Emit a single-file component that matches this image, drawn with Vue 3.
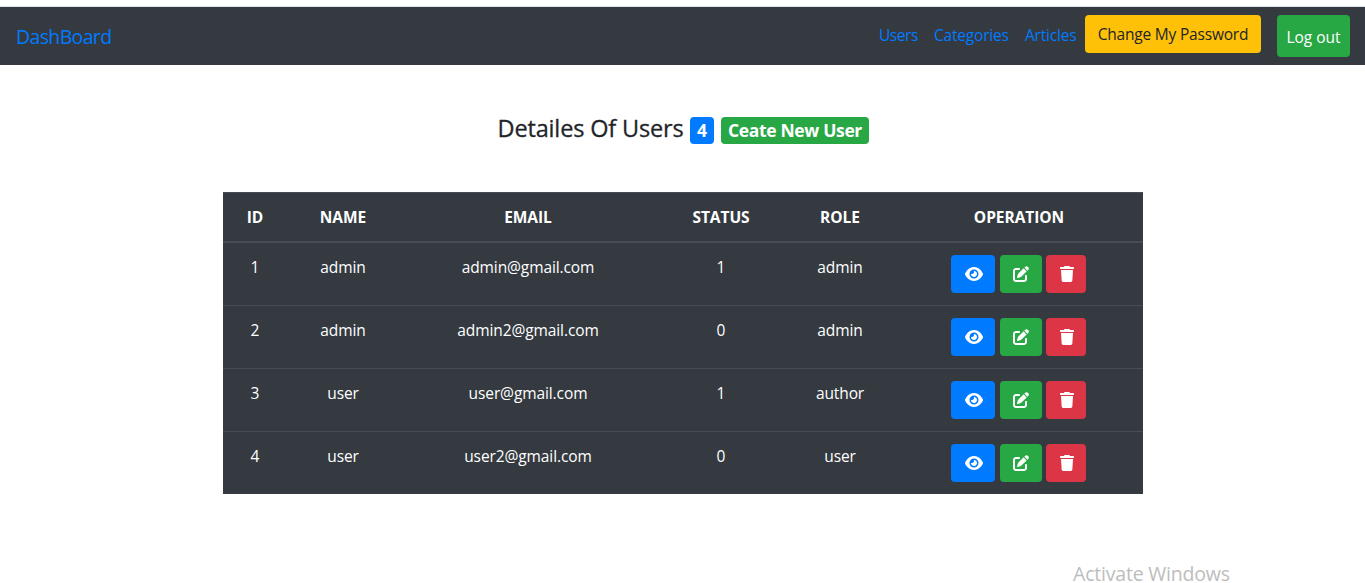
<script setup>
const users = [
  { id: 1, name: 'admin', email: 'admin@gmail.com', status: 1, role: 'admin' },
  { id: 2, name: 'admin', email: 'admin2@gmail.com', status: 0, role: 'admin' },
  { id: 3, name: 'user', email: 'user@gmail.com', status: 1, role: 'author' },
  { id: 4, name: 'user', email: 'user2@gmail.com', status: 0, role: 'user' },
]
</script>

<template>
  <div class="page">
    <nav class="navbar">
      <a class="brand">DashBoard</a>
      <div class="links">
        <a class="link users">Users</a>
        <a class="link categories">Categories</a>
        <a class="link articles">Articles</a>
        <button class="btn warning">Change My Password</button>
        <button class="btn logout">Log out</button>
      </div>
    </nav>

    <h4 class="title">
      <span class="heading">Detailes Of Users</span>
      <span class="badge count">{{ users.length }}</span>
      <span class="badge create">Ceate New User</span>
    </h4>

    <table class="table">
      <colgroup>
        <col class="c-id" /><col class="c-name" /><col class="c-email" />
        <col class="c-status" /><col class="c-role" /><col class="c-op" />
      </colgroup>
      <thead>
        <tr>
          <th>ID</th><th>NAME</th><th>EMAIL</th><th>STATUS</th><th>ROLE</th><th>OPERATION</th>
        </tr>
      </thead>
      <tbody>
        <tr v-for="u in users" :key="u.id">
          <td>{{ u.id }}</td>
          <td>{{ u.name }}</td>
          <td>{{ u.email }}</td>
          <td>{{ u.status }}</td>
          <td>{{ u.role }}</td>
          <td>
            <div class="ops">
              <button class="btn view" aria-label="View">
                <svg width="18" height="16" viewBox="0 0 576 512"><path d="M288 32c-80.8 0-145.5 36.8-192.6 80.6C48.6 156 17.3 208 2.5 243.7c-3.3 7.9-3.3 16.7 0 24.6C17.3 304 48.6 356 95.4 399.4C142.5 443.2 207.2 480 288 480s145.5-36.8 192.6-80.6c46.8-43.5 78.1-95.4 93-131.1c3.3-7.9 3.3-16.7 0-24.6c-14.9-35.7-46.2-87.7-93-131.1C433.5 68.8 368.8 32 288 32zM144 256a144 144 0 1 1 288 0 144 144 0 1 1 -288 0zm144-64c0 35.3-28.7 64-64 64c-7.1 0-13.9-1.2-20.3-3.3c-5.5-1.8-11.9 1.6-11.7 7.4c.3 6.9 1.3 13.8 3.2 20.7c13.7 51.2 66.4 81.6 117.6 67.9s81.6-66.4 67.9-117.6c-11.1-41.5-47.8-69.4-88.6-71.1c-5.8-.2-9.2 6.1-7.4 11.7c2.1 6.4 3.3 13.2 3.3 20.3z" /></svg>
              </button>
              <button class="btn edit" aria-label="Edit">
                <svg width="16" height="16" viewBox="0 0 512 512"><path d="M471.6 21.7c-21.9-21.9-57.3-21.9-79.2 0L362.3 51.7l97.9 97.9 30.1-30.1c21.9-21.9 21.9-57.3 0-79.2L471.6 21.7zm-299.2 220c-6.1 6.1-10.8 13.6-13.5 21.9l-29.6 88.8c-2.9 8.6-.6 18.1 5.8 24.6s15.9 8.7 24.6 5.8l88.8-29.6c8.2-2.7 15.7-7.4 21.9-13.5L437.7 172.3 339.7 74.3 172.4 241.7zM96 64C43 64 0 107 0 160V416c0 53 43 96 96 96H352c53 0 96-43 96-96V320c0-17.7-14.3-32-32-32s-32 14.3-32 32v96c0 17.7-14.3 32-32 32H96c-17.7 0-32-14.3-32-32V160c0-17.7 14.3-32 32-32h96c17.7 0 32-14.3 32-32s-14.3-32-32-32H96z" /></svg>
              </button>
              <button class="btn remove" aria-label="Delete">
                <svg width="14" height="16" viewBox="0 0 448 512"><path d="M53.21 467c1.562 24.84 23.02 45 47.9 45h245.8c24.88 0 46.33-20.16 47.9-45L416 128H32L53.21 467zM432 32H320l-11.58-23.16c-2.709-5.42-8.25-8.844-14.31-8.844H153.9c-6.061 0-11.6 3.424-14.31 8.844L128 32H16c-8.836 0-16 7.162-16 16V80c0 8.836 7.164 16 16 16h416c8.838 0 16-7.164 16-16V48C448 39.16 440.8 32 432 32z" /></svg>
              </button>
            </div>
          </td>
        </tr>
      </tbody>
    </table>

    <div class="watermark">Activate Windows</div>
  </div>
</template>

<style>
html, body { margin: 0; overflow: hidden; background: #fff; }
</style>

<style scoped>
.page {
  box-sizing: border-box;
  width: 1365px;
  height: 583px;
  padding-top: 6px;
  overflow: hidden;
  position: relative;
  font-family: "Open Sans", "Noto Sans", sans-serif;
  font-size: 15.5px;
  line-height: 24px;
  color: #212529;
  white-space: nowrap;
}
.navbar {
  box-sizing: border-box;
  height: 59px;
  padding: 8px 15px 8px 16px;
  border-top: 1px solid #dee2e6;
  background: #343a40;
  background-clip: padding-box;
  display: flex;
  justify-content: space-between;
}
.brand { font-size: 19.5px; line-height: 30px; padding-top: 7px; color: #007bff; letter-spacing: -0.65px; }
.links { display: flex; align-items: flex-start; }
.link { padding-top: 8px; color: #007bff; letter-spacing: -0.2px; }
.users { width: 55px; letter-spacing: -0.45px; }
.categories { width: 91px; }
.articles { width: 60px; }
.btn {
  box-sizing: border-box;
  display: flex;
  align-items: center;
  justify-content: center;
  height: 38px;
  padding: 0;
  border: 0;
  border-radius: 4px;
  font: inherit;
  color: #fff;
}
.warning { width: 176px; background: #ffc107; color: #212529; letter-spacing: -0.2px; }
.logout { width: 73px; height: 42px; margin-left: 16px; padding-top: 1px; background: #28a745; }
.title {
  display: flex;
  height: 29px;
  margin: 49px 0 0 497.5px;
  font-size: 23.5px;
  line-height: 29px;
  font-weight: 500;
}
.heading { width: 192.5px; letter-spacing: -0.15px; -webkit-text-stroke: 0.3px currentColor; }
.badge {
  height: 27px;
  margin-top: 3px;
  border-radius: 4px;
  background: #28a745;
  color: #fff;
  font-size: 17.5px;
  line-height: 27px;
  font-weight: 700;
  text-align: center;
}
.count { width: 24px; margin-right: 7px; background: #007bff; }
.create { width: 148px; letter-spacing: -0.35px; }
.table {
  width: 920px;
  margin: 49px 0 0 223px;
  table-layout: fixed;
  border-collapse: separate;
  border-spacing: 0;
  background: #343a40;
  color: #fff;
  text-align: center;
}
.c-id { width: 64px; }
.c-name { width: 112px; }
.c-email { width: 258px; }
.c-status { width: 128px; }
.c-role { width: 110px; }
.c-op { width: 248px; }
th {
  padding: 12px 0;
  border-top: 1px solid #454d55;
  border-bottom: 2px solid #454d55;
  font-weight: 700;
  letter-spacing: -0.05px;
}
td { padding: 12px 0; border-top: 1px solid #454d55; vertical-align: top; letter-spacing: -0.1px; }
tbody tr:first-child td { border-top: 0; }
.ops { display: flex; padding-left: 56px; }
.ops svg { fill: currentColor; }
.view { width: 44px; margin-right: 5px; padding-left: 2px; background: #007bff; }
.edit { width: 42px; margin-right: 4px; background: #28a745; }
.remove { width: 40px; padding-left: 1px; background: #dc3545; }
.watermark {
  position: absolute;
  left: 1073px;
  top: 560px;
  font-size: 19.5px;
  line-height: 28px;
  font-weight: 400;
  line-height: 23px;
  padding-top: 2px;
  letter-spacing: -0.2px;
  color: #bdbdbd;
}
</style>
